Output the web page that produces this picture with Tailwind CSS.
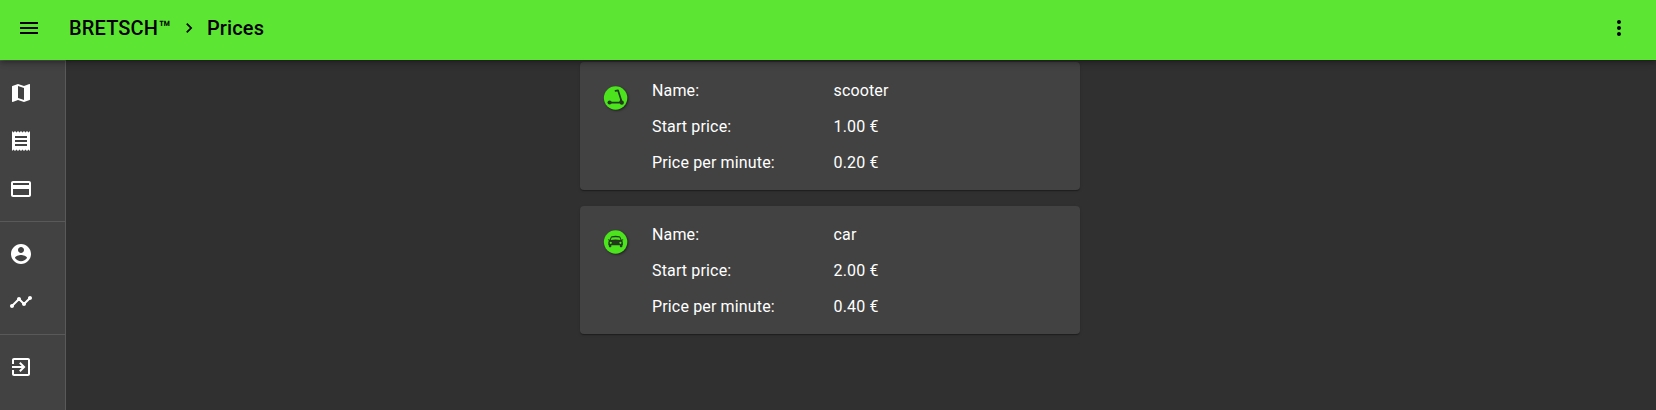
<!DOCTYPE html>
<html lang="en">
<head>
<meta charset="utf-8">
<title>BRETSCH™ – Prices</title>
<script src="https://cdn.jsdelivr.net/npm/@tailwindcss/browser@4"></script>
</head>
<body class="h-[410px] overflow-hidden bg-[#303030] font-['Roboto',sans-serif] text-base text-white flex flex-col">
<header class="relative z-10 h-[60px] shrink-0 bg-[#5ce633] text-black flex items-start pt-4 pl-[17px] pr-[25px] shadow-[0_2px_4px_-1px_rgba(0,0,0,.2),0_4px_5px_rgba(0,0,0,.14),0_1px_10px_rgba(0,0,0,.12)]">
  <svg class="size-6" viewBox="0 0 24 24"><path d="M3 18h18v-2H3v2zm0-5h18v-2H3v2zm0-7v2h18V6H3z"/></svg>
  <h1 class="ml-7 flex items-center text-xl leading-6 font-medium tracking-[0.0075em]">
    <span>BRETSCH™</span>
    <svg class="size-5 ml-[8px] mr-[8px]" viewBox="0 0 24 24"><path d="M10 6L8.59 7.41 13.17 12l-4.58 4.59L10 18l6-6z"/></svg>
    <span>Prices</span>
  </h1>
  <svg class="size-6 ml-auto" viewBox="0 0 24 24"><path d="M12 8c1.1 0 2-.9 2-2s-.9-2-2-2-2 .9-2 2 .9 2 2 2zm0 2c-1.1 0-2 .9-2 2s.9 2 2 2 2-.9 2-2-.9-2-2-2zm0 6c-1.1 0-2 .9-2 2s.9 2 2 2 2-.9 2-2-.9-2-2-2z"/></svg>
</header>
<div class="flex grow min-h-0">
  <nav class="w-[66px] shrink-0 bg-[#424242] border-r border-t border-[#595959]">
    <div class="py-2 pl-[9px]">
      <a class="flex h-12 items-center"><svg class="size-6" fill="#fff" viewBox="0 0 24 24"><path d="M20.5 3l-.16.03L15 5.1 9 3 3.36 4.9c-.21.07-.36.25-.36.48V20.5c0 .28.22.5.5.5l.16-.03L9 18.9l6 2.1 5.64-1.9c.21-.07.36-.25.36-.48V3.5c0-.28-.22-.5-.5-.5zM15 19l-6-2.11V5l6 2.11V19z"/></svg></a>
      <a class="flex h-12 items-center"><svg class="size-6" fill="#fff" viewBox="0 0 24 24"><path d="M18 17H6v-2h12v2zm0-4H6v-2h12v2zm0-4H6V7h12v2zM3 22l1.500-1.500L6 22l1.500-1.500L9 22l1.500-1.500L12 22l1.500-1.500L15 22l1.500-1.500L18 22l1.500-1.500L21 22V2l-1.500 1.500L18 2l-1.500 1.500L15 2l-1.500 1.500L12 2l-1.500 1.500L9 2 7.500 3.500 6 2 4.500 3.500 3 2v20z"/></svg></a>
      <a class="flex h-12 items-center"><svg class="size-6" fill="#fff" viewBox="0 0 24 24"><path d="M20 4H4c-1.110 0-1.990.89-1.990 2L2 18c0 1.110.89 2 2 2h16c1.110 0 2-.89 2-2V6c0-1.110-.89-2-2-2zm0 14H4v-6h16v6zm0-10H4V6h16v2z"/></svg></a>
    </div>
    <div class="border-t border-[#595959] py-2 pl-[9px]">
      <a class="flex h-12 items-center"><svg class="size-6" fill="#fff" viewBox="0 0 24 24"><path d="M12 2C6.480 2 2 6.480 2 12s4.480 10 10 10 10-4.480 10-10S17.520 2 12 2zm0 3c1.660 0 3 1.340 3 3s-1.340 3-3 3-3-1.340-3-3 1.340-3 3-3zm0 14.200c-2.500 0-4.710-1.280-6-3.220.03-1.990 4-3.080 6-3.080 1.990 0 5.970 1.090 6 3.080-1.290 1.940-3.500 3.220-6 3.220z"/></svg></a>
      <a class="flex h-12 items-center"><svg class="size-6" fill="#fff" viewBox="0 0 24 24"><path d="M23 8c0 1.100-.9 2-2 2-.18 0-.35-.02-.51-.07l-3.560 3.550c.05.16.07.34.07.52 0 1.100-.9 2-2 2s-2-.9-2-2c0-.18.02-.36.07-.52l-2.550-2.550c-.16.05-.34.07-.52.07s-.36-.02-.52-.07l-4.550 4.560c.05.16.07.33.07.51 0 1.100-.9 2-2 2s-2-.9-2-2 .9-2 2-2c.18 0 .35.02.51.07l4.560-4.550C8.020 9.360 8 9.180 8 9c0-1.100.9-2 2-2s2 .9 2 2c0 .18-.02.36-.07.52l2.550 2.550c.16-.05.34-.07.52-.07s.36.02.52.07l3.550-3.560C19.020 8.350 19 8.180 19 8c0-1.100.9-2 2-2s2 .9 2 2z"/></svg></a>
    </div>
    <div class="border-t border-[#595959] py-2 pl-[9px]">
      <a class="flex h-12 items-center"><svg class="size-6" fill="#fff" viewBox="0 0 24 24"><path d="M10.090 15.590L11.500 17l5-5-5-5-1.410 1.410L12.670 11H3v2h9.670l-2.580 2.590zM19 3H5c-1.110 0-2 .9-2 2v4h2V5h14v14H5v-4H3v4c0 1.100.89 2 2 2h14c1.100 0 2-.9 2-2V5c0-1.100-.9-2-2-2z"/></svg></a>
    </div>
  </nav>
  <main class="grow pt-[2px] pl-[514px] flex flex-col gap-4 tracking-[0.00938em]">
    <section class="w-[500px] h-32 rounded bg-[#424242] flex pt-[11px] pl-[23px] shadow-[0_2px_1px_-1px_rgba(0,0,0,.2),0_1px_1px_rgba(0,0,0,.14),0_1px_3px_rgba(0,0,0,.12)]">
      <svg class="w-[26px] h-[26px] mt-[12px] mr-[23px] drop-shadow-[1px_1px_1px_rgba(0,0,0,.5)]" viewBox="0 0 26 26"><circle cx="12.600" cy="13" r="11.700" fill="#4be41d"/><g stroke="#233a1c" fill="none" stroke-linecap="round" stroke-linejoin="round"><path d="M12.500 5.900l2.500-.6L18.700 16.800" stroke-width="1.700"/><path d="M7 17.700h11.500" stroke-width="1.800"/></g><g fill="#233a1c"><circle cx="6.600" cy="17.500" r="2.100"/><circle cx="18.800" cy="17.700" r="2.100"/><path d="M15.600 18l2.300-4.600 1.800 4.600z"/></g></svg>
      <dl class="grid grid-cols-[181.500px_auto] auto-rows-[36px] h-fit items-center">
        <dt>Name:</dt><dd>scooter</dd>
        <dt>Start price:</dt><dd>1.00 €</dd>
        <dt>Price per minute:</dt><dd>0.20 €</dd>
      </dl>
    </section>
    <section class="w-[500px] h-32 rounded bg-[#424242] flex pt-[11px] pl-[23px] shadow-[0_2px_1px_-1px_rgba(0,0,0,.2),0_1px_1px_rgba(0,0,0,.14),0_1px_3px_rgba(0,0,0,.12)]">
      <svg class="w-[26px] h-[26px] mt-[12px] mr-[23px] drop-shadow-[1px_1px_1px_rgba(0,0,0,.5)]" viewBox="0 0 26 26"><circle cx="12.600" cy="13" r="11.700" fill="#4be41d"/><path fill="#233a1c" fill-rule="evenodd" d="M8.800 7.300q3.800-1 7.600 0 .9.300 1.300 1.400l.8 2 1.500-.5.300.9-1.200.6q.8.700.8 1.800v2.800h-.6v1.300q0 .7-.7.700h-1q-.7 0-.7-.7v-1.300H8.300v1.300q0 .7-.7.700h-1q-.7 0-.7-.7v-1.300h-.6v-2.800q0-1.100.8-1.800l-1.200-.6.300-.9 1.500.5.800-2q.4-1.100 1.300-1.400zM8.700 8.600l-1 2.300q4.900-.8 9.800 0l-1-2.300q-3.900-.9-7.800 0zM7.700 12.700a1.100 1.100 0 1 0 .1 0zM17.400 12.700a1.100 1.100 0 1 0 .1 0z"/></svg>
      <dl class="grid grid-cols-[181.500px_auto] auto-rows-[36px] h-fit items-center">
        <dt>Name:</dt><dd>car</dd>
        <dt>Start price:</dt><dd>2.00 €</dd>
        <dt>Price per minute:</dt><dd>0.40 €</dd>
      </dl>
    </section>
  </main>
</div>
</body>
</html>
